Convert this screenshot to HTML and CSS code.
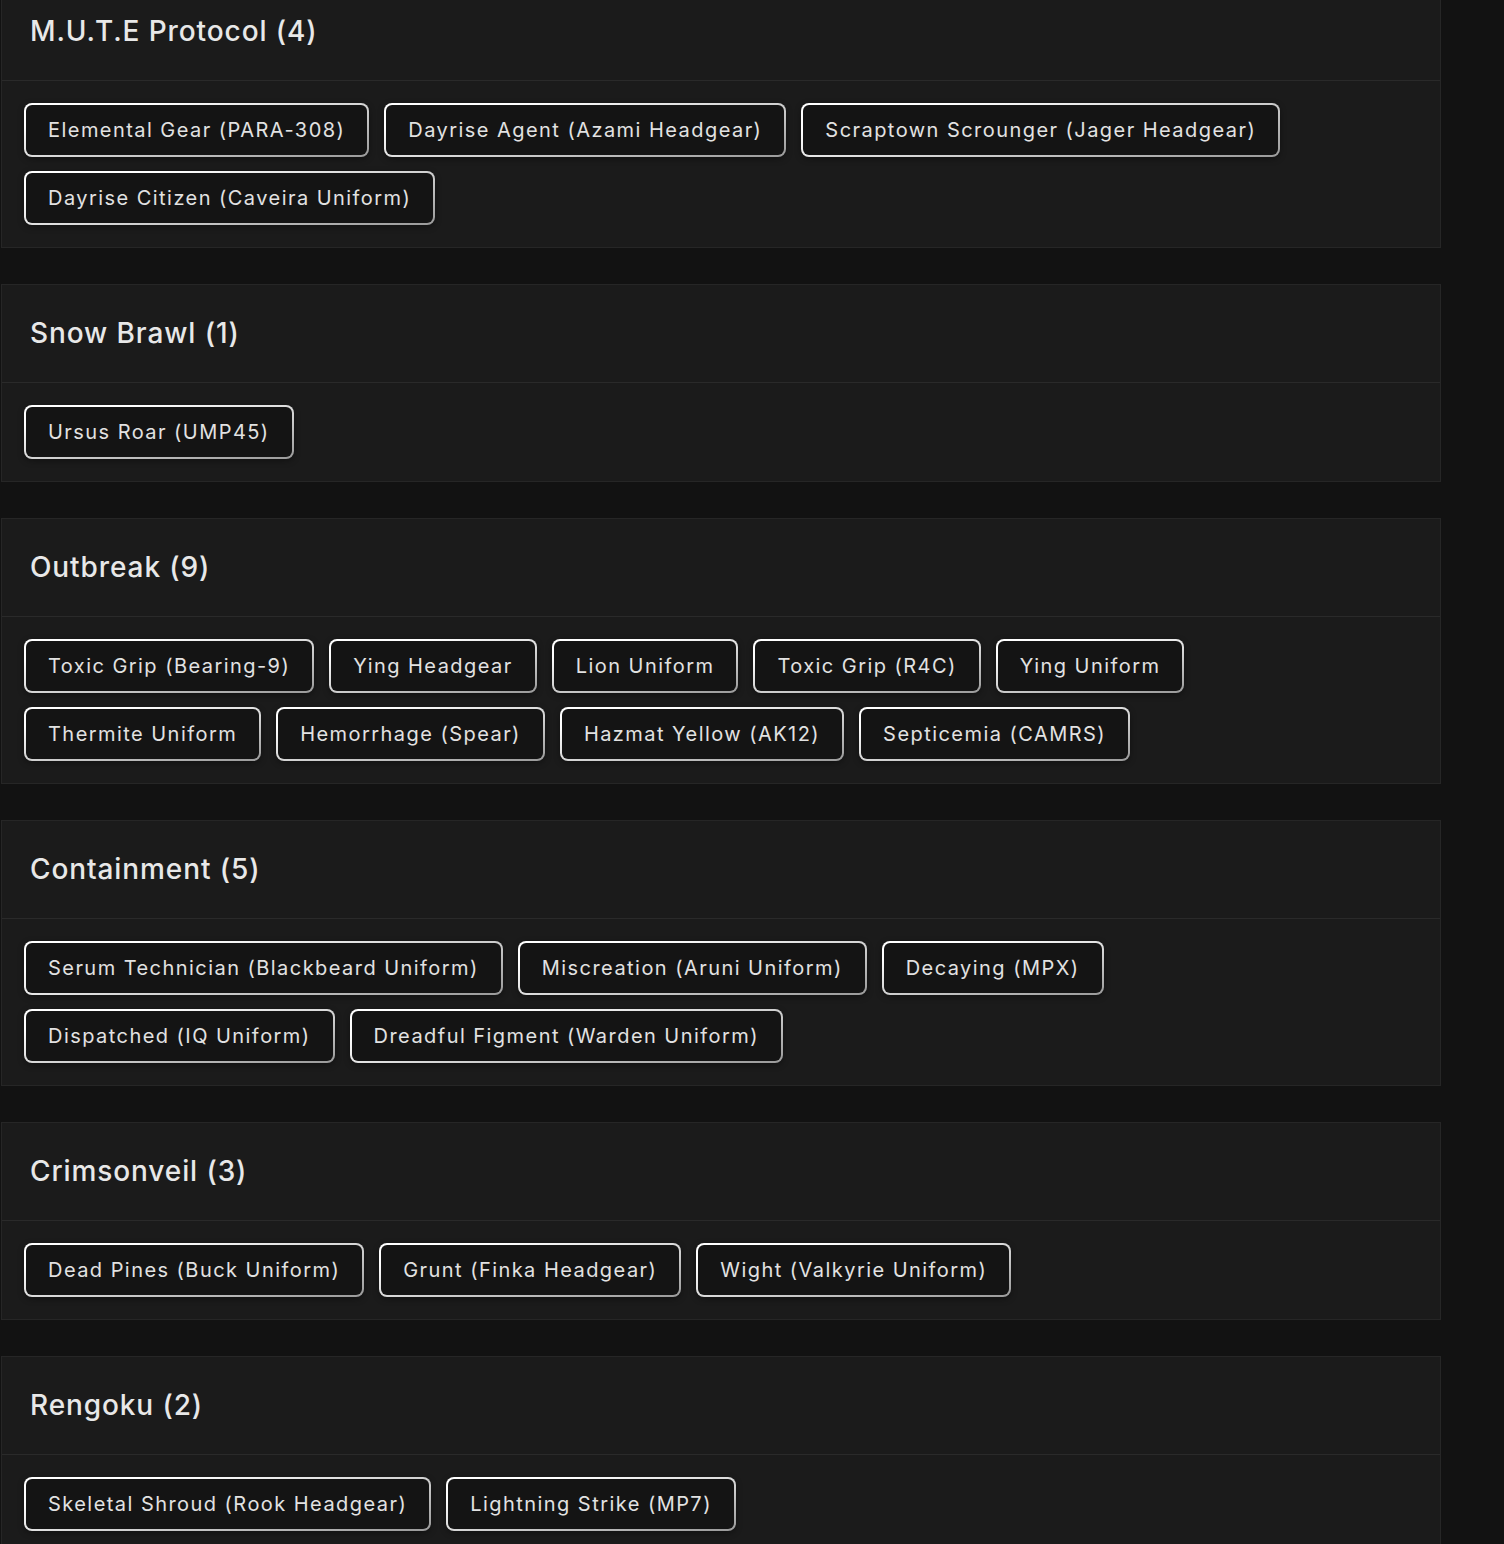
FILE: index.html
```html
<!DOCTYPE html>
<html lang="en">
<head>
  <meta charset="UTF-8">
  <meta name="viewport" content="width=device-width, initial-scale=1.0">
  <title>Event Collections</title>
  <link rel="stylesheet" href="styles.css">
</head>
<body>
  <div class="events">
    <div class="event-card">
      <div class="event-header"><h2>M.U.T.E Protocol (4)</h2></div>
      <div class="event-items">
        <span class="item">Elemental Gear (PARA-308)</span>
        <span class="item">Dayrise Agent (Azami Headgear)</span>
        <span class="item">Scraptown Scrounger (Jager Headgear)</span>
        <span class="item">Dayrise Citizen (Caveira Uniform)</span>
      </div>
    </div>

    <div class="event-card">
      <div class="event-header"><h2>Snow Brawl (1)</h2></div>
      <div class="event-items">
        <span class="item">Ursus Roar (UMP45)</span>
      </div>
    </div>

    <div class="event-card">
      <div class="event-header"><h2>Outbreak (9)</h2></div>
      <div class="event-items">
        <span class="item">Toxic Grip (Bearing-9)</span>
        <span class="item">Ying Headgear</span>
        <span class="item">Lion Uniform</span>
        <span class="item">Toxic Grip (R4C)</span>
        <span class="item">Ying Uniform</span>
        <span class="item">Thermite Uniform</span>
        <span class="item">Hemorrhage (Spear)</span>
        <span class="item">Hazmat Yellow (AK12)</span>
        <span class="item">Septicemia (CAMRS)</span>
      </div>
    </div>

    <div class="event-card">
      <div class="event-header"><h2>Containment (5)</h2></div>
      <div class="event-items">
        <span class="item">Serum Technician (Blackbeard Uniform)</span>
        <span class="item">Miscreation (Aruni Uniform)</span>
        <span class="item">Decaying (MPX)</span>
        <span class="item">Dispatched (IQ Uniform)</span>
        <span class="item">Dreadful Figment (Warden Uniform)</span>
      </div>
    </div>

    <div class="event-card">
      <div class="event-header"><h2>Crimsonveil (3)</h2></div>
      <div class="event-items">
        <span class="item">Dead Pines (Buck Uniform)</span>
        <span class="item">Grunt (Finka Headgear)</span>
        <span class="item">Wight (Valkyrie Uniform)</span>
      </div>
    </div>

    <div class="event-card">
      <div class="event-header"><h2>Rengoku (2)</h2></div>
      <div class="event-items">
        <span class="item">Skeletal Shroud (Rook Headgear)</span>
        <span class="item">Lightning Strike (MP7)</span>
      </div>
    </div>
  </div>
</body>
</html>
```

FILE: styles.css
```css
body {
  margin: 0;
  background-color: #121212;
  font-family: Inter, "Noto Sans", sans-serif;
  color: #e6e6e6;
}
.events {
  width: 1440px;
  margin: -18px 0 0 1px;
  display: flex;
  flex-direction: column;
  gap: 36px;
}
.event-card {
  background: #1b1b1b;
  border: 1px solid #262626;
}
.event-header {
  padding: 31px 28px 32px;
  border-bottom: 1px solid #2a2a2a;
}
.event-header h2 {
  margin: 0;
  font-size: 28px;
  line-height: 34px;
  font-weight: 500;
  letter-spacing: 0.9px;
  color: #e8e8e8;
}
.event-items {
  display: flex;
  flex-wrap: wrap;
  gap: 14px 15px;
  padding: 22px 80px 22px 22px;
}
.item {
  display: inline-block;
  padding: 13px 22px;
  font-size: 20px;
  line-height: 24px;
  letter-spacing: 1.45px;
  color: #e2e2e2;
  border: 2px solid transparent;
  border-radius: 8px;
  background:
    linear-gradient(#141414, #141414) padding-box,
    linear-gradient(170deg, #ffffff 20%, #9a9a9a) border-box;
  box-shadow: 0 2px 6px rgba(0, 0, 0, 0.35);
}
```
